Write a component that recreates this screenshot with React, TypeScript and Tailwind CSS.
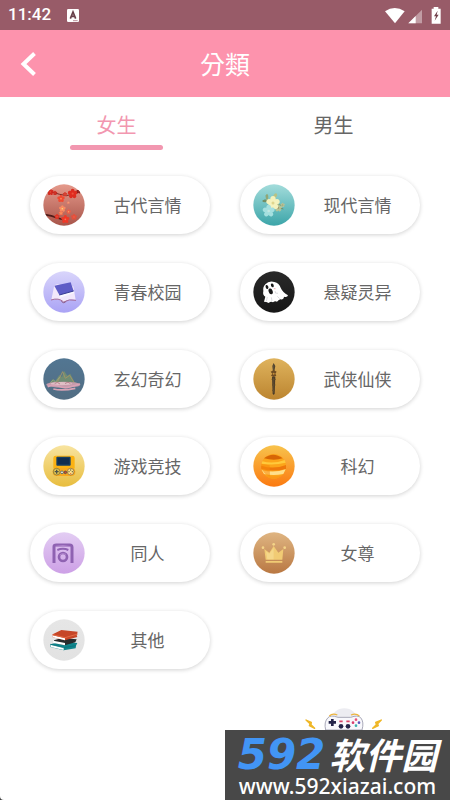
import { useState, type ReactNode } from "react";

function Disc({ id, top, bottom, children }: { id: string; top: string; bottom: string; children: ReactNode }) {
  return (
    <svg viewBox="0 0 126 126" className="size-[42px] shrink-0" aria-hidden="true">
      <defs>
        <linearGradient id={id} x1="0" y1="0" x2="0" y2="1">
          <stop offset="0" stopColor={top} />
          <stop offset="1" stopColor={bottom} />
        </linearGradient>
        <clipPath id={id + "-clip"}>
          <circle cx="63" cy="63" r="62" />
        </clipPath>
      </defs>
      <circle cx="63" cy="63" r="62" fill={`url(#${id})`} />
      <g clipPath={`url(#${id}-clip)`}>{children}</g>
    </svg>
  );
}

function Petals({ x, y, r, fill, center = "#f9e27a" }: { x: number; y: number; r: number; fill: string; center?: string }) {
  return (
    <g transform={`translate(${x} ${y})`}>
      {[0, 72, 144, 216, 288].map((a) => (
        <ellipse key={a} cx="0" cy={-r * 0.6} rx={r * 0.45} ry={r * 0.55} fill={fill} transform={`rotate(${a})`} />
      ))}
      <circle r={r * 0.25} fill={center} />
    </g>
  );
}

const blossom = (
  <Disc id="blossom" top="#e59a8c" bottom="#a8554a">
    <path d="M10 24 Q30 23 50 31 T92 30 L111 21" fill="none" stroke="#7a2a24" strokeWidth="3" />
    <path d="M6 92 Q25 95 44 102 T70 106" fill="none" stroke="#4e1b18" strokeWidth="5" />
    <Petals x={22} y={24} r={9} fill="#d5291f" center="#e8523c" />
    <Petals x={36} y={27} r={6} fill="#c92a20" center="#e8523c" />
    <Petals x={54} y={44} r={10} fill="#f04a31" center="#ff8a60" />
    <Petals x={66} y={31} r={6} fill="#d23a2c" center="#e8523c" />
    <Petals x={89} y={29} r={13} fill="#de2c20" center="#ee4f3a" />
    <Petals x={107} y={22} r={6} fill="#8b1d1a" center="#a8322a" />
    <Petals x={76} y={56} r={4} fill="#f0856d" />
    <Petals x={58} y={74} r={9} fill="#f98b61" />
    <Petals x={54} y={87} r={6} fill="#fa7754" />
    <Petals x={77} y={83} r={6} fill="#ef6049" />
    <Petals x={42} y={98} r={7} fill="#df3526" center="#ee5a44" />
    <Petals x={67} y={106} r={11} fill="#ef3928" center="#ff6f50" />
    <Petals x={93} y={99} r={8} fill="#e4503c" center="#ee6a52" />
  </Disc>
);

const bouquet = (
  <Disc id="bouquet" top="#a3dcdb" bottom="#3ca5a9">
    <path d="M35 47 L53 56 M39 35 L48 55 M68 68 L91 75 M70 61 L88 64" stroke="#6e8c61" strokeWidth="3" />
    <ellipse cx="36" cy="51" rx="8" ry="4" fill="#718f65" />
    <ellipse cx="42" cy="39" rx="4" ry="9" fill="#91a777" />
    <ellipse cx="66" cy="36" rx="5" ry="9" fill="#b7c284" transform="rotate(30 66 36)" />
    <Petals x={76} y={72} r={10} fill="#b7c396" center="#a78e59" />
    <Petals x={89} y={63} r={6} fill="#b5c197" center="#a78e59" />
    <Petals x={60} y={57} r={18} fill="#f4f2bd" center="#dfd58d" />
    <Petals x={47} y={81} r={16} fill="#a5e0df" center="#c4e8e3" />
  </Disc>
);

const campus = (
  <Disc id="campus" top="#d9d5fb" bottom="#aaa3f5">
    <path d="M25 86 L34 43 Q49 35 63 48 L91 46 L98 87 Q79 81 63 94 Q45 80 25 86Z" fill="#f2e8fb" />
    <path d="M24 87 Q47 79 62 93 Q78 83 99 88" fill="none" stroke="#a46b99" strokeWidth="3" />
    <path d="M55 91 Q62 100 70 90" fill="none" stroke="#8c638f" strokeWidth="3" />
    <path d="M39 50 L85 40 L94 65 L51 80Z" fill="#faf8ff" />
    <path d="M34 44 L83 34 L92 60 L49 72Z" fill="#5e5cc6" />
    <path d="M49 72 L92 60" stroke="#363b91" strokeWidth="3" />
  </Disc>
);

const ghost = (
  <Disc id="ghost" top="#292929" bottom="#171717">
    <path d="M37 40 Q48 28 64 33 Q79 37 83 50 Q89 64 105 73 Q103 80 93 77 Q92 87 82 85 Q76 88 72 92 Q66 89 60 94 Q54 90 47 96 Q40 92 33 92 L37 77 Q28 73 31 60 Q29 48 37 40Z" fill="#fff" />
    <path d="M66 60 Q65 69 75 67 M43 78 L40 91 M55 79 L57 90 M73 76 L80 83" fill="none" stroke="#cbcbd0" strokeWidth="2" />
    <ellipse cx="42" cy="48" rx="4" ry="6" fill="#171717" transform="rotate(-20 42 48)" />
    <ellipse cx="58" cy="43" rx="4" ry="6" fill="#171717" transform="rotate(-25 58 43)" />
    <ellipse cx="53" cy="61" rx="6" ry="9" fill="#171717" transform="rotate(-20 53 61)" />
    <ellipse cx="65" cy="53" rx="3" ry="2" fill="#f4b8bd" />
  </Disc>
);

const mountain = (
  <Disc id="mountain" top="#527692" bottom="#526d83">
    <path d="M16 79 L29 64 L37 69 L49 51 L57 57 L63 38 L73 53 L82 47 L94 71 L105 77Z" fill="#6f8c73" />
    <path d="M43 73 L59 41 L67 61 L80 52 L94 75" fill="none" stroke="#9f9468" strokeWidth="3" />
    <path d="M22 74 L31 65 L38 73 L50 57" fill="none" stroke="#a2ad80" strokeWidth="2" />
    <ellipse cx="61" cy="80" rx="51" ry="9" fill="#c69aab" />
    <ellipse cx="55" cy="77" rx="32" ry="5" fill="#e0bfc6" />
    <path d="M14 86 Q32 78 48 85 T80 87 T111 78 M31 93 Q58 99 97 91" fill="none" stroke="#d9a3b5" strokeWidth="5" />
    <path d="M35 77 L43 73 L51 78 M66 77 L75 72 L83 78" fill="none" stroke="#a46973" strokeWidth="2" />
  </Disc>
);

const sword = (
  <Disc id="sword" top="#dfb35d" bottom="#bc8530">
    <path d="M62 15 L67 24 L64 40 H60 L58 24Z" fill="#4e4432" />
    <path d="M53 41 L62 36 L71 41 L67 47 L70 53 L62 57 L54 53 L58 47Z" fill="#6e4c22" />
    <path d="M57 56 H67 L65 107 L62 111 L59 107Z" fill="#493b29" />
    <path d="M56 64 H68 M57 81 H67 M58 97 H66" stroke="#5d4828" strokeWidth="3" />
    <circle cx="62" cy="47" r="3" fill="#c58c38" />
    <path d="M62 59 V105 M62 22 V37" stroke="#8a6a38" strokeWidth="1" />
  </Disc>
);

const handheld = (
  <Disc id="handheld" top="#f8e4a0" bottom="#e8bd3e">
    <rect x="31" y="32" width="64" height="43" rx="7" fill="#fbb212" />
    <rect x="40" y="35" width="43" height="27" rx="3" fill="#183f61" />
    <path d="M44 39 H79 V58 H44Z" fill="#102d50" />
    <rect x="29" y="69" width="68" height="24" rx="12" fill="#f7a81d" />
    <circle cx="41" cy="80" r="10" fill="#e9c84f" stroke="#6b6537" strokeWidth="2" />
    <path d="M41 74 V86 M35 80 H47" stroke="#4c5448" strokeWidth="4" />
    <circle cx="83" cy="80" r="10" fill="#ffe08a" stroke="#785e33" strokeWidth="2" />
    <circle cx="83" cy="75" r="2" fill="#5a623e" />
    <circle cx="78" cy="80" r="2" fill="#5a623e" />
    <circle cx="88" cy="80" r="2" fill="#5a623e" />
    <circle cx="83" cy="86" r="2" fill="#e66b27" />
    <circle cx="57" cy="82" r="4" fill="#faf2d3" stroke="#2e5573" strokeWidth="2" />
    <circle cx="67" cy="82" r="4" fill="#cc4931" stroke="#384b55" strokeWidth="2" />
  </Disc>
);

const planet = (
  <Disc id="planet" top="#f8c34c" bottom="#fb7a11">
    <circle cx="62" cy="64" r="37" fill="#fca51a" />
    <path d="M33 40 Q60 18 89 40 Q64 48 33 40Z" fill="#d76505" />
    <path d="M28 49 Q61 58 95 45 L98 53 Q62 62 26 56Z" fill="#ffc93c" />
    <path d="M25 62 Q62 74 99 60 L99 72 Q60 82 25 71Z" fill="#ee780c" />
    <path d="M26 75 Q62 85 98 73 L91 87 Q61 93 33 87Z" fill="#ffe08c" />
    <path d="M25 57 L50 61 L51 95 Q29 86 25 65Z" fill="#f78b0b" fillOpacity="0.55" />
    <path d="M34 91 Q63 99 89 89 Q64 112 34 91Z" fill="#fa9a18" />
  </Disc>
);

const fanwork = (
  <Disc id="fanwork" top="#e3cdf3" bottom="#cda0e6">
    <g fill="none" stroke="#8f62b2" strokeLinejoin="round">
      <path d="M33 93 V44 Q33 39 40 39 H80 Q87 39 87 46 V93" strokeWidth="9" />
      <path d="M43 54 Q60 47 76 54" strokeWidth="6" />
      <circle cx="60" cy="75" r="12" strokeWidth="8" />
    </g>
    <path d="M38 43 Q60 38 82 44 M50 69 Q57 61 69 67" fill="none" stroke="#b287cd" strokeWidth="3" />
  </Disc>
);

const crown = (
  <Disc id="crown" top="#dfb582" bottom="#b97843">
    <path d="M34 51 L49 62 L62 42 L76 62 L91 51 L88 83 H38Z M38 87 H88 V92 H38Z" fill="#f1cb74" />
    <path d="M49 65 L62 47 L62 82 H43 L39 58Z" fill="#f5d78a" />
    <g fill="#f4d488">
      <circle cx="62" cy="37" r="4" />
      <circle cx="30" cy="47" r="4" />
      <circle cx="95" cy="47" r="4" />
    </g>
  </Disc>
);

const books = (
  <Disc id="books" top="#e6e6e6" bottom="#e2e2e2">
    <path d="M22 76 L52 68 L103 72 L99 80 L98 88 L62 94 L22 84Z" fill="#11848b" />
    <path d="M23 77 L62 86 V93 L23 84Z" fill="#fff" />
    <path d="M33 64 L56 57 L101 61 L97 70 L65 79 L33 71Z" fill="#282b2d" />
    <path d="M31 65 L66 72 V79 L31 72Z" fill="#fff" />
    <path d="M29 46 L55 33 L104 38 L101 48 L103 54 L66 64 L29 55Z" fill="#c64627" />
    <path d="M29 49 L66 58 V64 L29 55Z" fill="#fff" />
    <path d="M29 47 L66 56 L104 45" fill="none" stroke="#e26843" strokeWidth="3" />
    <path d="M22 76 L62 86 L98 80" fill="none" stroke="#087078" strokeWidth="2" />
  </Disc>
);

const categories = [
  { name: "古代言情", icon: blossom },
  { name: "现代言情", icon: bouquet },
  { name: "青春校园", icon: campus },
  { name: "悬疑灵异", icon: ghost },
  { name: "玄幻奇幻", icon: mountain },
  { name: "武侠仙侠", icon: sword },
  { name: "游戏竞技", icon: handheld },
  { name: "科幻", icon: planet },
  { name: "同人", icon: fanwork },
  { name: "女尊", icon: crown },
  { name: "其他", icon: books },
];

function StatusBar() {
  return (
    <div className="flex h-[30px] items-center bg-[#985b68] px-2 text-white">
      <span className="font-[Roboto,sans-serif] text-[17px] font-medium">11:42</span>
      <svg viewBox="0 0 36 39" className="ml-4 h-[13px] w-3" aria-hidden="true">
        <rect width="36" height="39" rx="4" fill="#fff" />
        <path d="M10 29 L18 9 L26 29 M13 22 H23" fill="none" stroke="#68404a" strokeWidth="5" />
        <path d="M18 35 H32" stroke="#985b68" strokeWidth="2" />
      </svg>
      <svg viewBox="0 0 171 51" className="ml-auto h-[17px] w-[57px]" aria-hidden="true">
        <path d="M0 13 Q29 -7 59 13 L30 49Z" fill="#fff" />
        <path d="M70 49 L111 8 V49Z" fill="#fff" fillOpacity="0.4" />
        <path d="M70 49 L92 27 V49Z" fill="#fff" />
        <path d="M146 0 H160 V5 H167 V50 H140 V5 H146Z" fill="#fff" />
        <path d="M158 11 L147 28 H153 L149 41 L161 23 H155Z" fill="#70404b" />
      </svg>
    </div>
  );
}

function Watermark() {
  return (
    <div className="absolute right-0 bottom-0 w-[225px]">
      <svg viewBox="0 0 234 66" className="ml-20 h-[22px] w-[78px]" aria-hidden="true">
        <ellipse cx="118" cy="33" rx="38" ry="32" fill="#ececf1" />
        <path d="M69 29 Q77 20 99 28 H137 Q159 20 167 29 Q178 42 171 66 H62 Q56 42 69 29Z" fill="#f8f8fc" stroke="#a9a9b9" strokeWidth="3" />
        <path d="M73 24 Q82 15 97 21 M138 21 Q153 15 163 24" fill="none" stroke="#edb53e" strokeWidth="4" />
        <path d="M82 33 V54 M71 43 H93" stroke="#24244a" strokeWidth="8" />
        <circle cx="153" cy="35" r="4" fill="#e9547b" />
        <circle cx="144" cy="44" r="4" fill="#d83c6c" />
        <circle cx="162" cy="44" r="4" fill="#5b55b9" />
        <circle cx="153" cy="53" r="4" fill="#3cb1ae" />
        <path d="M103 40 H113 M124 40 H134" stroke="#d8466b" strokeWidth="5" />
        <circle cx="108" cy="55" r="7" fill="#24244a" />
        <circle cx="129" cy="55" r="7" fill="#24244a" />
        <path d="M3 36 L19 43 L18 50 L29 61 L13 53 L15 47Z M229 36 L212 43 L214 50 L203 61 L220 53 L218 47Z" fill="#efb728" stroke="#efb728" strokeWidth="4" strokeLinejoin="round" />
      </svg>
      <div className="flex h-[70px] flex-col items-center bg-[#484848] text-white">
        <div className="flex h-[46px] items-center justify-center gap-1 whitespace-nowrap italic">
          <span className="pt-1 font-['DejaVu_Sans',sans-serif] text-[42px] leading-10 font-bold text-[#4295f5]">592</span>
          <span className="font-['Noto_Sans_CJK_SC',sans-serif] text-4xl leading-10 font-bold">软件园</span>
        </div>
        <span className="font-['Noto_Sans',sans-serif] text-[21px] leading-5 font-medium">www.592xiazai.com</span>
      </div>
    </div>
  );
}

export default function App() {
  const [tab, setTab] = useState("女生");
  return (
    <div className="bg-neutral-700">
      <div className="relative flex min-h-screen flex-col rounded-bl-sm bg-white font-['Noto_Sans_CJK_SC',sans-serif]">
        <StatusBar />
        <header className="grid h-[67px] grid-cols-[1fr_auto_1fr] items-center bg-[#fd93ad] text-white">
          <button type="button" aria-label="返回" className="ml-5 flex h-10 w-5 items-center">
            <svg viewBox="0 0 18 26" className="h-[26px] w-[18px]" aria-hidden="true">
              <path d="M14.5 2.5 L3.5 13 L14.5 23.5" fill="none" stroke="currentColor" strokeWidth="4" />
            </svg>
          </button>
          <h1 className="font-['Noto_Sans_CJK_TC',sans-serif] text-[25px] font-normal">分類</h1>
        </header>
        <nav className="grid grid-cols-2 px-2 pt-3">
          {["女生", "男生"].map((name) => (
            <button
              key={name}
              type="button"
              aria-pressed={tab === name}
              onClick={() => setTab(name)}
              className={`flex flex-col items-center gap-1 text-xl leading-8 ${tab === name ? "text-[#f297b0]" : "text-[#666666]"}`}
            >
              {name}
              <span className={`h-[5px] w-[93px] rounded-full ${tab === name ? "bg-[#f297b0]" : "bg-transparent"}`} />
            </button>
          ))}
        </nav>
        <main className="grid grid-cols-2 gap-x-[30px] gap-y-[29px] px-[30px] pt-[26px] pb-8">
          {categories.map(({ name, icon }) => (
            <button
              key={name}
              type="button"
              className="flex h-[58px] items-center rounded-full bg-white pl-[13px] text-[#666666] shadow-[0_1px_4px_rgba(0,0,0,0.18)]"
            >
              {icon}
              <span className="flex-1 text-center text-[17px]">{name}</span>
            </button>
          ))}
        </main>
        <Watermark />
      </div>
    </div>
  );
}
